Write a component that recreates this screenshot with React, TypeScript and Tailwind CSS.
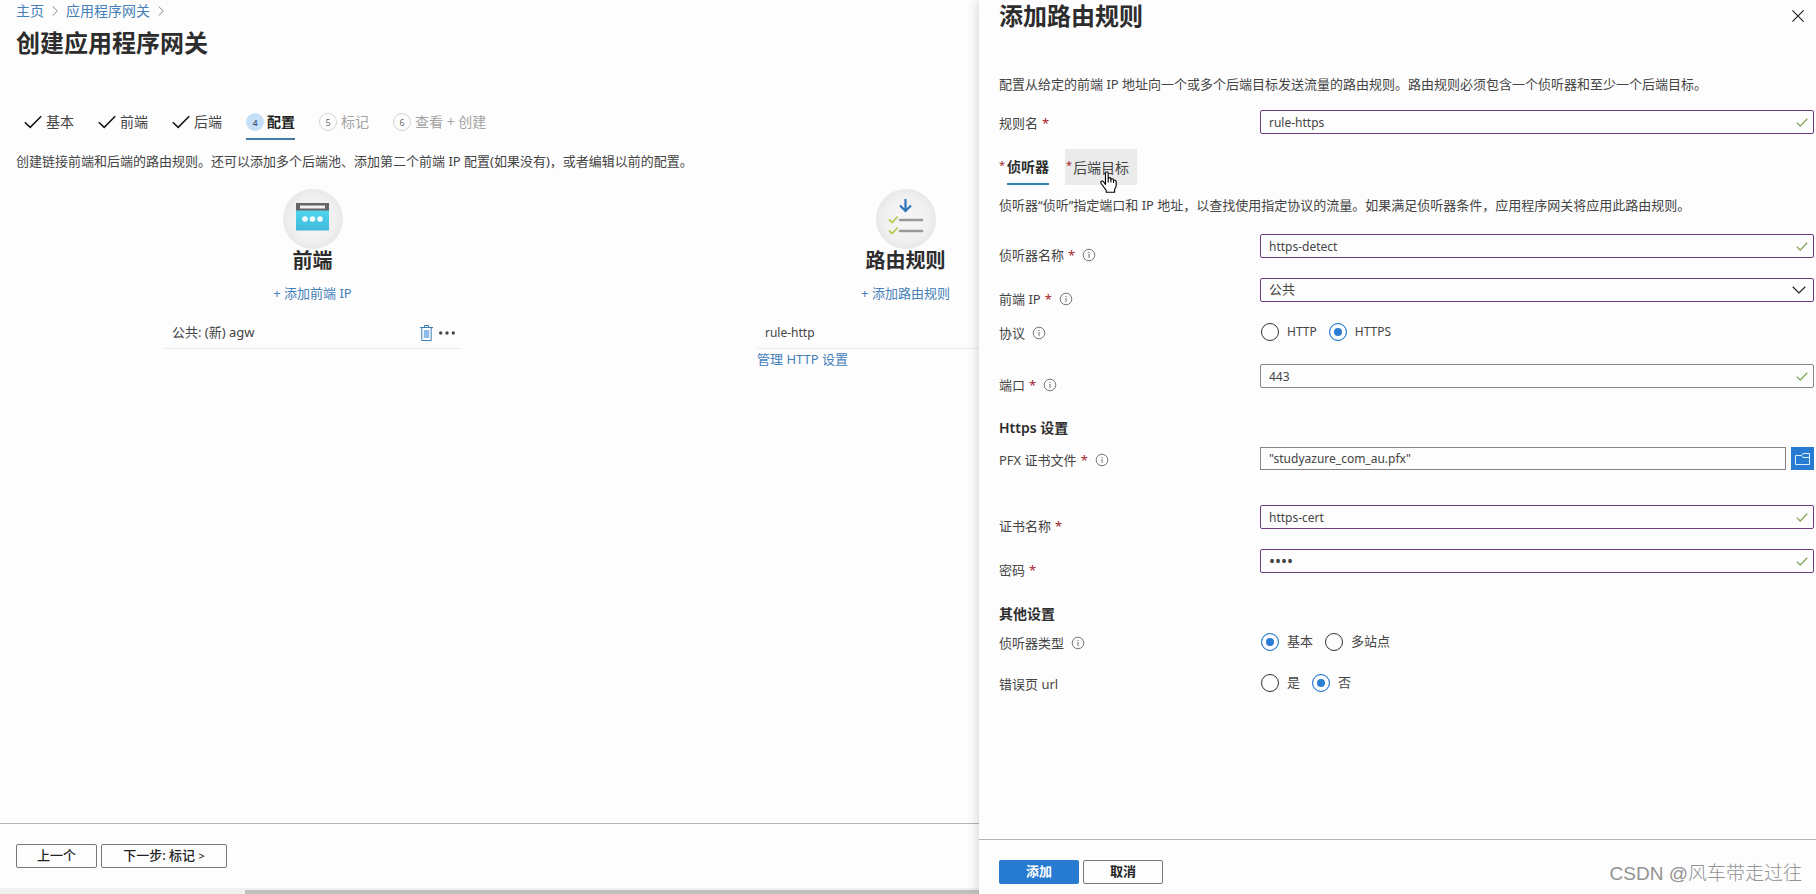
import type { ReactNode } from "react";

const FONT = "font-['Noto_Sans','Noto_Sans_CJK_SC',sans-serif]";

function Check({ className }: { className: string }) {
  return (
    <svg viewBox="0 0 18 14" className={className} fill="none" stroke="currentColor" aria-hidden="true">
      <path d="M0.8 7.2 L6.2 12.4 L17.2 1.2" />
    </svg>
  );
}

function Chevron({ className }: { className: string }) {
  return (
    <svg viewBox="0 0 6 10" className={className} fill="none" stroke="currentColor" aria-hidden="true">
      <path d="M0.7 0.5 L5.3 5 L0.7 9.5" />
    </svg>
  );
}

function Info() {
  return (
    <svg viewBox="0 0 12 12" className="ml-2 h-3 w-3 shrink-0 overflow-visible text-[#6a6a6a]" fill="none" stroke="currentColor" aria-hidden="true">
      <circle cx="6" cy="6" r="5.8" strokeWidth="0.9" />
      <path d="M6 5v3.8" strokeWidth="1" />
      <path d="M6 3v1.1" strokeWidth="1.1" />
    </svg>
  );
}

function DoneStep({ label }: { label: string }) {
  return (
    <li>
      <a href="#" className="flex h-9 items-center gap-1">
        <Check className="h-3.5 w-[18px] stroke-[1.5] text-[#111]" />
        {label}
      </a>
    </li>
  );
}

function NextStep({ n, label }: { n: number; label: string }) {
  return (
    <li>
      <a href="#" className="flex h-9 items-center gap-1 text-[#a3a3a3]">
        <span className="flex h-[18px] w-[18px] items-center justify-center rounded-full border border-[#d4d4d4] text-[9px] leading-none text-[#6d6d6d]">
          {n}
        </span>
        {label}
      </a>
    </li>
  );
}

type RowProps = { label: string; id?: string; required?: boolean; info?: boolean; low?: boolean; className: string; children: ReactNode };

function Row({ label, id, required, info, low, className, children }: RowProps) {
  const text = (
    <>
      {label}
      {required && <span className="ml-1 text-[#a4262c]">*</span>}
      {info && <Info />}
    </>
  );
  const pad = low ? "flex items-center pt-[11px] leading-5" : "flex items-center pt-[3px] leading-5";
  return (
    <div className={`grid grid-cols-[261px_1fr] items-start ${className}`}>
      {id ? (
        <label htmlFor={id} className={pad}>
          {text}
        </label>
      ) : (
        <span className={pad}>{text}</span>
      )}
      {children}
    </div>
  );
}

type FieldProps = { id: string; value: string; type?: string; dirty?: boolean };

function Field({ id, value, type = "text", dirty = true }: FieldProps) {
  return (
    <div className="relative flex">
      <input
        id={id}
        type={type}
        defaultValue={value}
        className={`h-6 w-full rounded-xs border bg-transparent px-2 outline-none ${type === "password" ? "text-base" : "text-xs"} ${dirty ? "border-[#713f80]" : "border-[#858585]"}`}
      />
      <Check className="absolute top-2 right-1.5 h-[9px] w-3 stroke-2 text-[#83a65a]" />
    </div>
  );
}

function Radio({ name, label, checked, latin }: { name: string; label: string; checked?: boolean; latin?: boolean }) {
  return (
    <label className={`flex items-center gap-2 ${latin ? "text-xs" : ""}`}>
      <input
        type="radio"
        name={name}
        defaultChecked={checked}
        className="h-[18px] w-[18px] appearance-none rounded-full border border-[#333] checked:border-[#2b7cd3] checked:bg-[#2b7cd3] checked:shadow-[inset_0_0_0_4px_#fdfdfd]"
      />
      {label}
    </label>
  );
}

export default function App() {
  return (
    <div className={`grid min-h-screen grid-cols-[979fr_837fr] bg-[#fdfdfd] text-[13px] text-[#444] ${FONT}`}>
      <main className="flex min-w-0 flex-col overflow-hidden">
        <div className="flex-1 pl-4">
          <nav className="flex h-[22px] items-center text-sm leading-5 text-[#4580b8]" aria-label="breadcrumb">
            <a href="#">主页</a>
            <Chevron className="mr-2 ml-2 h-2.5 w-1.5 text-[#888]" />
            <a href="#">应用程序网关</a>
            <Chevron className="ml-2 h-2.5 w-1.5 text-[#888]" />
          </nav>
          <h1 className="mt-[5px] text-2xl leading-8 font-bold text-[#2d2d2d]">创建应用程序网关</h1>
          <ul className="mt-[45px] flex gap-6 pl-2 text-sm">
            <DoneStep label="基本" />
            <DoneStep label="前端" />
            <DoneStep label="后端" />
            <li>
              <a href="#" className="flex h-9 items-center gap-[3px] border-b-2 border-[#447ba5] pt-0.5 font-bold text-[#222]">
                <span className="flex h-[18px] w-[18px] items-center justify-center rounded-full bg-[#c5dff6] text-[9px] leading-none font-semibold text-[#47627c]">
                  4
                </span>
                配置
              </a>
            </li>
            <NextStep n={5} label="标记" />
            <NextStep n={6} label="查看 + 创建" />
          </ul>
          <p className="mt-[11px] leading-5 whitespace-nowrap">
            创建链接前端和后端的路由规则。还可以添加多个后端池、添加第二个前端 IP 配置(如果没有)，或者编辑以前的配置。
          </p>
          <div className="mt-[18px] grid w-[1186px] grid-cols-2">
            <section className="flex flex-col items-center">
              <svg viewBox="0 0 60 60" className="h-[60px] w-[60px]" aria-hidden="true">
                <defs>
                  <radialGradient id="disc">
                    <stop offset="0" stopColor="#f7f7f7" />
                    <stop offset="0.75" stopColor="#f0f0f0" />
                    <stop offset="1" stopColor="#e8e8e8" />
                  </radialGradient>
                  <linearGradient id="sky" x1="0" y1="0" x2="0" y2="1">
                    <stop offset="0" stopColor="#50d5ee" />
                    <stop offset="1" stopColor="#40b8dc" />
                  </linearGradient>
                </defs>
                <circle cx="30" cy="30" r="30" fill="url(#disc)" />
                <rect x="13" y="14" width="33" height="8" fill="#666" />
                <rect x="17" y="16.5" width="25" height="3" fill="#f2f2f2" />
                <rect x="13" y="21.5" width="33" height="20" fill="url(#sky)" />
                <circle cx="22" cy="30" r="2.8" fill="#f4fcfe" />
                <circle cx="29.5" cy="30" r="2.8" fill="#f4fcfe" />
                <circle cx="37" cy="30" r="2.8" fill="#f4fcfe" />
              </svg>
              <h2 className="text-xl leading-6 font-bold text-[#2d2d2d]">前端</h2>
              <a href="#" className="mt-2.5 leading-5 text-[#4580b8]">+ 添加前端 IP</a>
              <div className="mt-[18px] flex h-7 w-[297px] items-center border-b border-[#ebebeb] pr-1.5 pb-1 pl-2">
                <span className="flex-1">公共: (新) agw</span>
                <button type="button" aria-label="删除" className="mr-1.5">
                  <svg viewBox="0 0 13 16" className="h-4 w-[13px]" fill="none" stroke="#3f7fb8" aria-hidden="true">
                    <path d="M0 2.5h13M4.5 2.5v-2h4v2M1.8 2.5v13h9.4v-13" />
                    <path d="M3.8 5h5.4v8H3.8z" fill="#8ebbe8" stroke="none" />
                  </svg>
                </button>
                <button type="button" aria-label="更多">
                  <svg viewBox="0 0 16 4" className="h-1 w-4" fill="#484848" aria-hidden="true">
                    <circle cx="1.7" cy="2" r="1.7" />
                    <circle cx="8" cy="2" r="1.7" />
                    <circle cx="14.3" cy="2" r="1.7" />
                  </svg>
                </button>
              </div>
            </section>
            <section className="flex flex-col items-center">
              <svg viewBox="0 0 60 60" className="h-[60px] w-[60px]" fill="none" aria-hidden="true">
                <circle cx="30" cy="30" r="30" fill="url(#disc)" />
                <path d="M29.5 10v11.5M24 16.5l5.5 5.5 5.5-5.5" stroke="#2f74b8" strokeWidth="2.2" />
                <path d="M24 31h22M24 42h22" stroke="#999" strokeWidth="2.6" strokeLinecap="round" />
                <path d="M13 30.5l3.2 3 5.5-6M13 41.5l3.2 3 5.5-6" stroke="#b4cc4e" strokeWidth="1.8" />
              </svg>
              <h2 className="text-xl leading-6 font-bold text-[#2d2d2d]">路由规则</h2>
              <a href="#" className="mt-2.5 leading-5 text-[#4580b8]">+ 添加路由规则</a>
              <div className="mt-[18px] flex h-7 w-[297px] items-center border-b border-[#ebebeb] pb-1 pl-2 text-xs">rule-http</div>
              <div className="flex w-[297px]">
                <a href="#" className="leading-5 text-[#4580b8]">管理 HTTP 设置</a>
              </div>
            </section>
          </div>
        </div>
        <footer className="flex gap-1 border-t border-[#b3b3b3] px-4 pt-5 pb-5 font-medium text-[#222]">
          <button type="button" className="h-6 w-[81px] rounded-xs border border-[#777]">上一个</button>
          <button type="button" className="h-6 w-[126px] rounded-xs border border-[#777]">
            下一步: 标记 <span className="text-[11px]">&gt;</span>
          </button>
        </footer>
        <div className="flex h-1.5 items-end bg-[#f0f0f0]">
          <div className="ml-[25%] h-1 flex-1 bg-[#bfbfbf]" />
        </div>
      </main>

      <aside className="relative z-10 flex min-w-0 flex-col bg-[#fdfdfd] shadow-[0_0_12px_rgba(0,0,0,0.2)]">
        <div className="flex-1 pr-0.5 pl-5">
          <div className="flex h-8 items-center justify-between pr-2.5">
            <h2 className="text-2xl leading-8 font-bold text-[#2d2d2d]">添加路由规则</h2>
            <button type="button" aria-label="关闭" className="text-[#222]">
              <svg viewBox="0 0 12 12" className="h-3 w-3" fill="none" stroke="currentColor" aria-hidden="true">
                <path d="M0.4 0.4l11.2 11.2M11.6 0.4L0.4 11.6" strokeWidth="1.2" />
              </svg>
            </button>
          </div>
          <p className="mt-[42px] leading-5">
            配置从给定的前端 IP 地址向一个或多个后端目标发送流量的路由规则。路由规则必须包含一个侦听器和至少一个后端目标。
          </p>
          <Row label="规则名" id="rule" required className="mt-4">
            <Field id="rule" value="rule-https" />
          </Row>
          <div role="tablist" className="mt-[15px] flex h-9 gap-4 text-sm">
            <button type="button" role="tab" aria-selected="true" className="flex items-stretch gap-0.5 font-bold text-[#2d2d2d]">
              <span className="self-center pb-1 text-[11px] font-normal text-[#a4262c]">*</span>
              <span className="flex items-center border-b-2 border-[#3583b8] pt-0.5">侦听器</span>
            </button>
            <button type="button" role="tab" aria-selected="false" className="relative flex items-center gap-px bg-[#ebebeb] pr-2 pl-px">
              <span className="pb-1 text-[11px] text-[#a4262c]">*</span>
              <span className="pt-0.5">后端目标</span>
              <svg viewBox="0 0 17 22" className="absolute top-[22px] left-[35px] h-[22px] w-[17px]" fill="#fff" stroke="#000" strokeWidth="1.1" strokeLinejoin="round" aria-hidden="true">
                <path d="M5.5 13.5V2.2C5.5 0.3 8.2 0.3 8.2 2.2V7.5C8.6 6.2 10.8 6.4 10.9 7.9V8.4C11.4 7.3 13.4 7.6 13.5 9V9.5C14 8.7 16.2 9 16.2 10.8V14.5C16.2 16.5 14.6 17.5 14.6 19V21.3H6.2V19.3L1.2 12.5C-0.1 10.4 2.3 9.2 3.6 10.8Z" />
                <path d="M8.2 7.5v4M10.9 8.2v3.4M13.5 9.3v2.6" fill="none" />
              </svg>
            </button>
          </div>
          <p className="mt-2.5 leading-5">
            侦听器“侦听”指定端口和 IP 地址，以查找使用指定协议的流量。如果满足侦听器条件，应用程序网关将应用此路由规则。
          </p>
          <Row label="侦听器名称" id="listener" required info low className="mt-[19px]">
            <Field id="listener" value="https-detect" />
          </Row>
          <Row label="前端 IP" id="frontend" required info low className="mt-[13px]">
            <div className="relative flex">
              <select id="frontend" className="h-6 w-full appearance-none rounded-xs border border-[#713f80] bg-transparent px-2">
                <option>公共</option>
              </select>
              <svg viewBox="0 0 14 8" className="pointer-events-none absolute top-2 right-2 h-2 w-3.5" fill="none" stroke="#222" strokeWidth="1.2" aria-hidden="true">
                <path d="M0.7 0.8l6.3 6.2 6.3-6.2" />
              </svg>
            </div>
          </Row>
          <Row label="协议" info className="mt-[11px]">
            <div className="flex h-6 gap-3 pl-px">
              <Radio name="protocol" label="HTTP" latin />
              <Radio name="protocol" label="HTTPS" latin checked />
            </div>
          </Row>
          <Row label="端口" id="port" required info low className="mt-5">
            <Field id="port" value="443" dirty={false} />
          </Row>
          <h3 className="mt-[23px] text-sm leading-5 font-semibold text-[#2d2d2d]">Https 设置</h3>
          <Row label="PFX 证书文件" id="pfx" required info className="mt-[9px]">
            <div className="flex gap-[5px]">
              <input id="pfx" type="text" readOnly value={'"studyazure_com_au.pfx"'} className="h-[23px] min-w-0 flex-1 border border-[#858585] bg-transparent px-2 text-xs outline-none" />
              <button type="button" aria-label="浏览" className="flex h-[23px] w-[23px] items-center justify-center bg-[#277bd0]">
                <svg viewBox="0 0 15 12" className="h-3 w-[15px]" fill="none" stroke="#d9f1ff" aria-hidden="true">
                  <path d="M0.5 11.5V2.5H6.5L8 0.5H14.5V11.5ZM6.5 2.5L8 4.5H14.5" />
                </svg>
              </button>
            </div>
          </Row>
          <Row label="证书名称" id="cert" required low className="mt-[35px]">
            <Field id="cert" value="https-cert" />
          </Row>
          <Row label="密码" id="password" required low className="mt-[13px]">
            <Field id="password" type="password" value="abcd" />
          </Row>
          <h3 className="mt-6 text-sm leading-5 font-semibold text-[#2d2d2d]">其他设置</h3>
          <Row label="侦听器类型" info className="mt-1.5">
            <div className="flex h-6 gap-3 pl-px">
              <Radio name="kind" label="基本" checked />
              <Radio name="kind" label="多站点" />
            </div>
          </Row>
          <Row label="错误页 url" className="mt-[17px]">
            <div className="flex h-6 gap-3 pl-px">
              <Radio name="errorPage" label="是" />
              <Radio name="errorPage" label="否" checked />
            </div>
          </Row>
        </div>
        <footer className="flex items-start justify-between border-t border-[#b3b3b3] pt-5 pr-3.5 pb-2 pl-5">
          <div className="flex gap-1 font-semibold">
            <button type="button" className="h-6 w-20 rounded-xs bg-[#277bd0] text-white">添加</button>
            <button type="button" className="h-6 w-20 rounded-xs border border-[#777] text-[#222]">取消</button>
          </div>
          <span className="pt-0.5 font-['Liberation_Sans','Noto_Sans_CJK_SC',sans-serif] text-[19px] leading-6 font-light text-[#929292]">CSDN @风车带走过往</span>
        </footer>
      </aside>
    </div>
  );
}
